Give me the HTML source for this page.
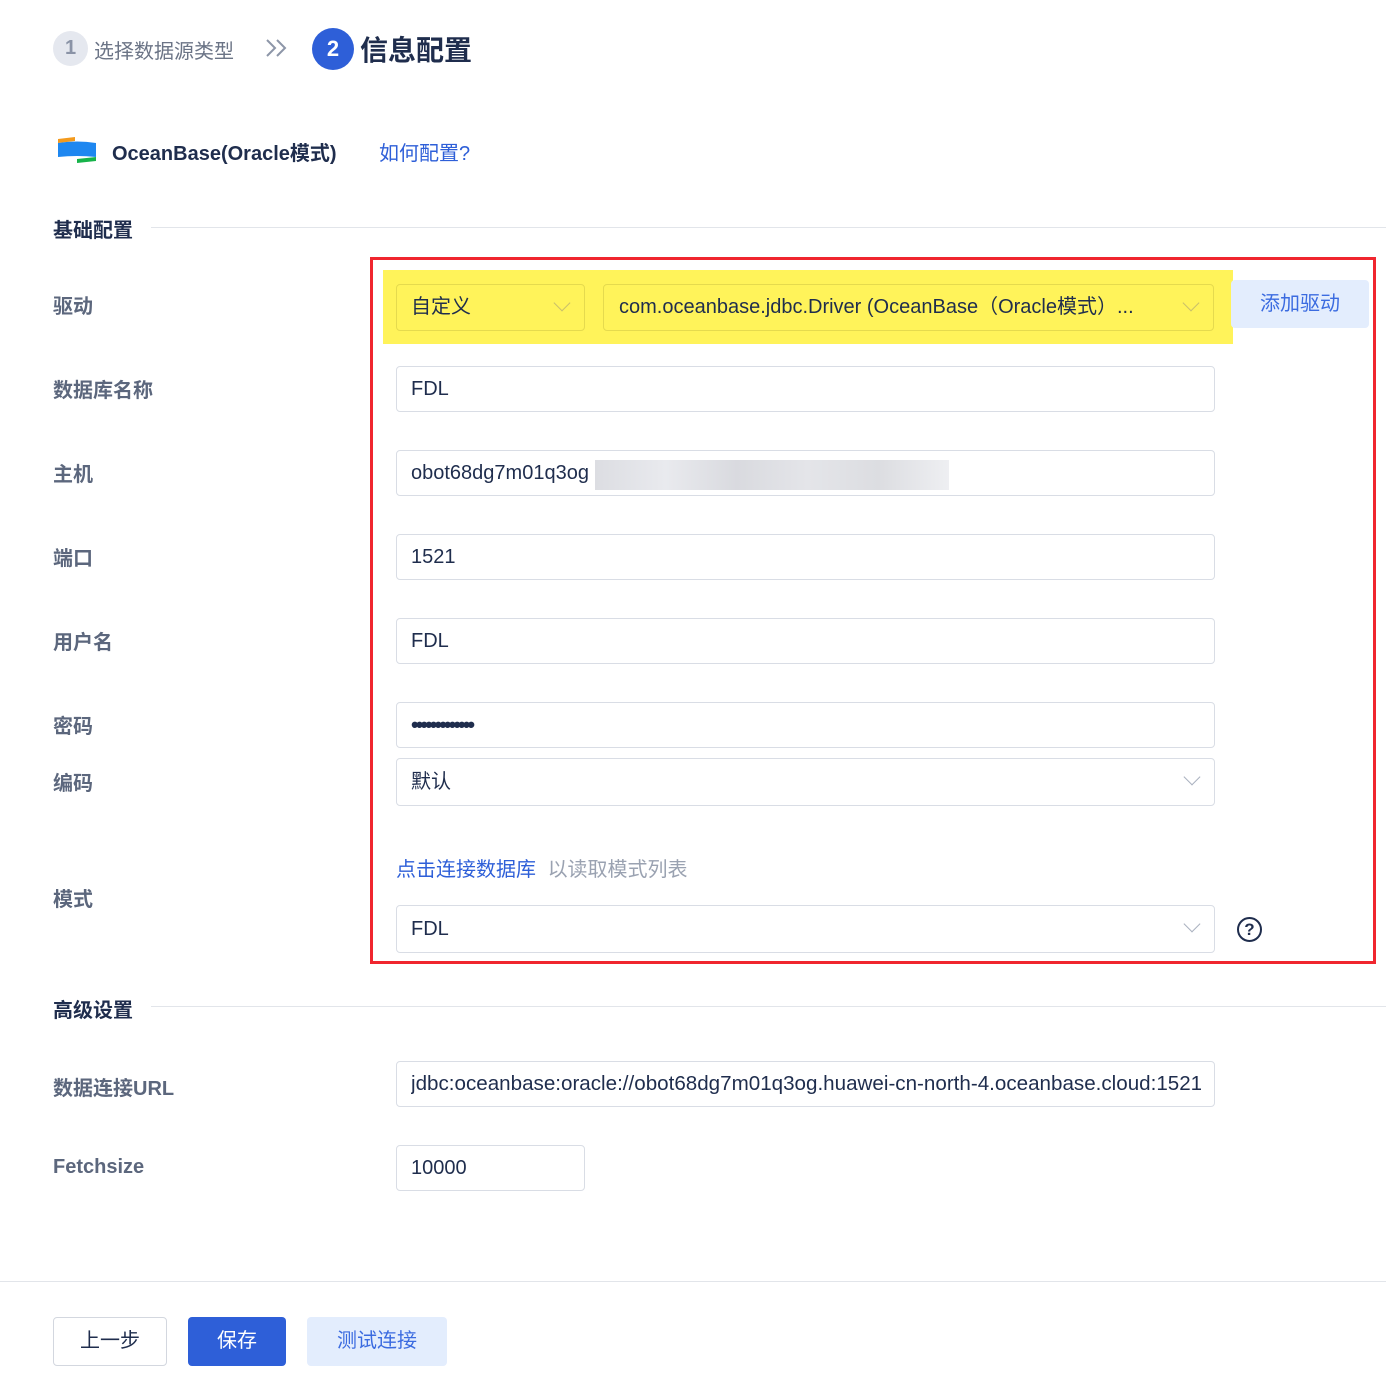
<!DOCTYPE html>
<html><head><meta charset="utf-8"><style>
*{box-sizing:border-box;margin:0;padding:0}
body{width:1386px;height:1376px;background:#fff;position:relative;font-family:"Liberation Sans","Noto Sans CJK SC",sans-serif;overflow:hidden;color:#1f2d4d}
.a{position:absolute}
.lbl{position:absolute;left:53px;font-size:20px;font-weight:bold;color:#5c677d}
.inp{position:absolute;left:396px;width:819px;height:46px;border:1px solid #d9dde5;border-radius:4px;font-size:20px;padding-left:14px;line-height:44px;color:#1f2d4d;background:#fff}
.chev{position:absolute;right:16px;top:12px;width:12px;height:12px;border-right:1.5px solid #aab1bf;border-bottom:1.5px solid #aab1bf;transform:rotate(45deg)}
.hr{position:absolute;height:1px;background:#e2e5ea}
</style></head><body>
<div class="a" style="left:53px;top:31px;width:35px;height:35px;border-radius:50%;background:#e5e8ef;color:#8a93a6;font-weight:bold;font-size:20px;text-align:center;line-height:35px">1</div>
<div class="a" style="left:94px;top:35px;font-size:20px;color:#6b7486">选择数据源类型</div>
<svg class="a" style="left:265px;top:38px" width="24" height="20"><path d="M2 2 L10 10 L2 18 M12 2 L20 10 L12 18" fill="none" stroke="#8d96a8" stroke-width="2"/></svg>
<div class="a" style="left:312px;top:28px;width:42px;height:42px;border-radius:50%;background:#2e5fd8;color:#fff;font-weight:bold;font-size:22px;text-align:center;line-height:42px">2</div>
<div class="a" style="left:360px;top:29px;font-size:28px;font-weight:bold;color:#1f2d4d">信息配置</div>
<svg class="a" style="left:57px;top:137px" width="40" height="26"><path d="M1 2 L18 0 L18 4 L1 6Z" fill="#f39a1d"/><path d="M1 6 Q20 3 39 6 L39 20 Q20 18 1 20Z" fill="#1e87f0"/><path d="M20 22 L39 20 L39 24 L20 26Z" fill="#17b34a"/></svg>
<div class="a" style="left:112px;top:137px;font-size:20px;font-weight:bold;color:#1f2d4d">OceanBase(Oracle模式)</div>
<div class="a" style="left:379px;top:137px;font-size:20px;color:#2e5fd8">如何配置?</div>
<div class="a" style="left:53px;top:214px;font-size:20px;font-weight:bold;color:#1f2d4d">基础配置</div>
<div class="hr" style="left:151px;top:227px;width:1235px"></div>
<div class="lbl" style="top:290px">驱动</div>
<div class="lbl" style="top:374px">数据库名称</div>
<div class="lbl" style="top:458px">主机</div>
<div class="lbl" style="top:542px">端口</div>
<div class="lbl" style="top:626px">用户名</div>
<div class="lbl" style="top:710px">密码</div>
<div class="lbl" style="top:767px">编码</div>
<div class="lbl" style="top:883px">模式</div>
<div class="a" style="left:370px;top:257px;width:1006px;height:707px;border:3px solid #f0262f"></div>
<div class="a" style="left:383px;top:270px;width:850px;height:74px;background:#fff35a"></div>
<div class="a" style="left:396px;top:284px;width:189px;height:47px;border:1px solid #e5da4e;border-radius:4px;font-size:20px;padding-left:14px;line-height:45px">自定义<div class="chev" style="border-color:#c9c06a"></div></div>
<div class="a" style="left:603px;top:284px;width:611px;height:47px;border:1px solid #e5da4e;border-radius:4px;font-size:20px;padding-left:15px;line-height:45px;white-space:nowrap">com.oceanbase.jdbc.Driver (OceanBase（Oracle模式）...<div class="chev" style="border-color:#c9c06a"></div></div>
<div class="a" style="left:1231px;top:280px;width:138px;height:48px;background:#e3edfd;border-radius:4px;color:#3b6be0;font-size:20px;text-align:center;line-height:48px">添加驱动</div>
<div class="inp" style="top:366px">FDL</div>
<div class="inp" style="top:450px">obot68dg7m01q3og<div class="a" style="left:198px;top:9px;width:354px;height:30px;background:linear-gradient(90deg,#dcdde2,#e9eaee,#d9dadf,#e4e5e9,#dcdde1,#eeeff2)"></div></div>
<div class="inp" style="top:534px">1521</div>
<div class="inp" style="top:618px">FDL</div>
<div class="inp" style="top:702px;font-size:22px;font-weight:bold;letter-spacing:-3px">•••••••••••••</div>
<div class="inp" style="top:758px;height:48px;line-height:46px">默认<div class="chev"></div></div>
<div class="a" style="left:396px;top:853px;font-size:20px;color:#2e5fd8">点击连接数据库 <span style="color:#9aa2b1;margin-left:6px">以读取模式列表</span></div>
<div class="inp" style="top:905px;height:48px;line-height:46px">FDL<div class="chev"></div></div>
<div class="a" style="left:1237px;top:917px;width:25px;height:25px;border:2px solid #1f2d4d;border-radius:50%;font-size:17px;text-align:center;line-height:21px;font-weight:bold">?</div>
<div class="a" style="left:53px;top:994px;font-size:20px;font-weight:bold;color:#1f2d4d">高级设置</div>
<div class="hr" style="left:151px;top:1006px;width:1235px"></div>
<div class="lbl" style="top:1072px">数据连接URL</div>
<div class="lbl" style="top:1156px">Fetchsize</div>
<div class="inp" style="top:1061px;overflow:hidden;white-space:nowrap;padding-right:14px"><div style="overflow:hidden;width:790px;font-size:20.6px">jdbc:oceanbase:oracle://obot68dg7m01q3og.huawei-cn-north-4.oceanbase.cloud:1521</div></div>
<div class="inp" style="top:1145px;width:189px">10000</div>
<div class="hr" style="left:0;top:1281px;width:1386px"></div>
<div class="a" style="left:53px;top:1317px;width:114px;height:49px;border:1px solid #d3d7df;border-radius:4px;font-size:20px;text-align:center;line-height:47px;color:#1f2d4d">上一步</div>
<div class="a" style="left:188px;top:1317px;width:98px;height:49px;background:#2e5fd8;border-radius:4px;font-size:20px;text-align:center;line-height:49px;color:#fff">保存</div>
<div class="a" style="left:307px;top:1317px;width:140px;height:49px;background:#e3edfd;border-radius:4px;font-size:20px;text-align:center;line-height:49px;color:#3b6be0">测试连接</div>
</body></html>
